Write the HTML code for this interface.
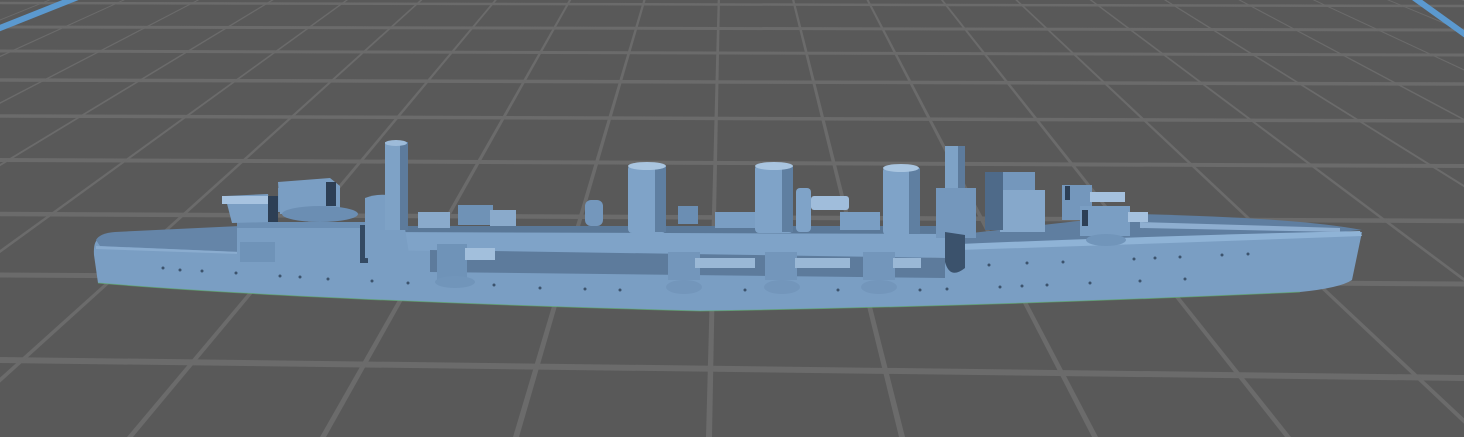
<!DOCTYPE html>
<html><head><meta charset="utf-8"><style>
html,body{margin:0;padding:0;background:#595959;overflow:hidden}
svg{display:block}
</style></head><body>
<svg width="1464" height="437" viewBox="0 0 1464 437" xmlns="http://www.w3.org/2000/svg">
<rect width="1464" height="437" fill="#595959"/>
<g stroke="#6b6b6b" fill="none">
<line x1="0" y1="3" x2="1464" y2="6" stroke-width="2.5"/>
<line x1="0" y1="27" x2="1464" y2="30" stroke-width="3"/>
<line x1="0" y1="51" x2="1464" y2="55" stroke-width="3"/>
<line x1="0" y1="80" x2="1464" y2="84" stroke-width="3.5"/>
<line x1="0" y1="116" x2="1464" y2="121" stroke-width="3.5"/>
<line x1="0" y1="160" x2="1464" y2="166" stroke-width="4"/>
<line x1="0" y1="214" x2="1464" y2="221" stroke-width="4.5"/>
<line x1="0" y1="275" x2="1464" y2="284" stroke-width="5"/>
<line x1="0" y1="360" x2="1464" y2="378" stroke-width="6"/>
</g>
<g fill="#6b6b6b">
<polygon points="725,-274 -1996,437 -1990,437"/>
<polygon points="725,-274 -1803,437 -1797,437"/>
<polygon points="725,-274 -1610,437 -1604,437"/>
<polygon points="725,-274 -1417,437 -1411,437"/>
<polygon points="725,-274 -1224,437 -1218,437"/>
<polygon points="725,-274 -1031,437 -1025,437"/>
<polygon points="725,-274 -838,437 -832,437"/>
<polygon points="725,-274 -645,437 -639,437"/>
<polygon points="725,-274 -452,437 -446,437"/>
<polygon points="725,-274 -259,437 -253,437"/>
<polygon points="725,-274 -66,437 -60,437"/>
<polygon points="725,-274 127,437 133,437"/>
<polygon points="725,-274 320,437 326,437"/>
<polygon points="725,-274 513,437 519,437"/>
<polygon points="725,-274 706,437 712,437"/>
<polygon points="725,-274 899,437 905,437"/>
<polygon points="725,-274 1092,437 1098,437"/>
<polygon points="725,-274 1285,437 1291,437"/>
<polygon points="725,-274 1478,437 1484,437"/>
<polygon points="725,-274 1671,437 1677,437"/>
<polygon points="725,-274 1864,437 1870,437"/>
<polygon points="725,-274 2057,437 2063,437"/>
<polygon points="725,-274 2250,437 2256,437"/>
<polygon points="725,-274 2443,437 2449,437"/>
<polygon points="725,-274 2636,437 2642,437"/>
<polygon points="725,-274 2829,437 2835,437"/>
<polygon points="725,-274 3022,437 3028,437"/>
<polygon points="725,-274 3215,437 3221,437"/>
</g>
<line x1="-5" y1="30" x2="78" y2="-3" stroke="#5b99cf" stroke-width="6"/>
<line x1="1413" y1="-3" x2="1470" y2="38" stroke="#5b99cf" stroke-width="6"/>

<path d="M100 238 Q93 240 94 255 L98 283 Q300 300 700 311 Q1000 306 1300 292 Q1340 288 1352 280 L1362 232 L945 240 L945 258 L100 240 Z" fill="#7a9ec3"/>
<path d="M945 236 L1140 214 Q1300 218 1362 230 Q1300 236 1200 240 L945 246 Z" fill="#5f7ea0"/>
<path d="M960 244 Q1150 236 1360 231 L1362 236 Q1150 244 960 250 Z" fill="#8fb3d6"/>
<path d="M96 240 Q100 233 115 232 L240 226 L240 252 L100 246 Z" fill="#6585a8"/>
<path d="M96 246 L240 252 L240 254 L96 249 Z" fill="#8aaccf"/>
<rect x="365" y="226" width="580" height="8" fill="#5a7898"/>
<path d="M365 232 L945 234 L945 258 L365 250 Z" fill="#7fa3c8"/>
<path d="M430 250 L945 258 L945 278 L430 272 Z" fill="#5d7b9c"/>
<rect x="237" y="222" width="128" height="40" fill="#7a9ec3"/>
<rect x="237" y="222" width="128" height="6" fill="#6c8fb4"/>
<rect x="360" y="225" width="8" height="38" fill="#344a63"/>
<rect x="240" y="242" width="35" height="20" fill="#6f93b8"/>
<path d="M225 196 L268 194 L272 222 L232 223 Z" fill="#7a9ec3"/>
<rect x="222" y="196" width="50" height="8" fill="#a7c3e0"/>
<rect x="268" y="196" width="10" height="26" fill="#2d3f55"/>
<rect x="278" y="188" width="40" height="24" fill="#7497bc"/>
<path d="M278 182 L330 178 L340 186 L340 212 L280 214 Z" fill="#7a9ec3"/>
<rect x="326" y="182" width="10" height="24" fill="#2d3f55"/>
<ellipse cx="320" cy="214" rx="38" ry="8" fill="#6b8eb3"/>
<path d="M365 198 Q380 192 400 197 L410 260 L365 258 Z" fill="#7a9ec3"/>
<rect x="385" y="142" width="22" height="88" fill="#7ea2c6"/>
<rect x="400" y="142" width="8" height="88" fill="#5d7b9c"/>
<ellipse cx="396" cy="143" rx="11" ry="3" fill="#9dbbd9"/>
<rect x="418" y="212" width="32" height="16" fill="#8aaacb"/>
<rect x="458" y="205" width="35" height="20" fill="#6f92b6"/>
<rect x="490" y="210" width="26" height="16" fill="#8aaacb"/>
<rect x="585" y="200" width="18" height="26" rx="6" fill="#7497bc"/>
<rect x="678" y="206" width="20" height="18" fill="#6b8eb3"/>
<rect x="715" y="212" width="40" height="16" fill="#7a9ec3"/>
<rect x="840" y="212" width="40" height="18" fill="#7a9ec3"/>
<rect x="437" y="244" width="30" height="40" fill="#6f93b8"/>
<rect x="465" y="248" width="30" height="12" fill="#a2bfdc"/>
<ellipse cx="455" cy="282" rx="20" ry="6" fill="#7195ba"/>
<g>
<rect x="628" y="165" width="38" height="68" rx="4" fill="#7fa3c8"/>
<rect x="655" y="166" width="11" height="66" fill="#5f7fa1"/>
<ellipse cx="647" cy="166" rx="19" ry="4" fill="#a9c5e0"/>
<rect x="755" y="165" width="38" height="68" rx="4" fill="#7fa3c8"/>
<rect x="782" y="166" width="11" height="66" fill="#5f7fa1"/>
<ellipse cx="774" cy="166" rx="19" ry="4" fill="#a9c5e0"/>
<rect x="883" y="167" width="37" height="68" rx="4" fill="#7fa3c8"/>
<rect x="909" y="168" width="11" height="66" fill="#5f7fa1"/>
<ellipse cx="901" cy="168" rx="18" ry="4" fill="#a9c5e0"/>
<rect x="796" y="188" width="15" height="44" rx="4" fill="#7fa3c8"/>
<rect x="811" y="196" width="38" height="14" rx="3" fill="#a0bddb"/>
</g>
<g fill="#7396bb">
<rect x="668" y="252" width="32" height="28"/><ellipse cx="684" cy="287" rx="18" ry="7"/>
<rect x="765" y="252" width="32" height="28"/><ellipse cx="782" cy="287" rx="18" ry="7"/>
<rect x="863" y="252" width="32" height="28"/><ellipse cx="879" cy="287" rx="18" ry="7"/>
</g>
<rect x="695" y="258" width="60" height="10" fill="#9ab8d6"/>
<rect x="795" y="258" width="55" height="10" fill="#9ab8d6"/>
<rect x="893" y="258" width="28" height="10" fill="#9ab8d6"/>
<rect x="945" y="146" width="20" height="82" fill="#7ea2c6"/>
<rect x="958" y="146" width="7" height="82" fill="#5d7b9c"/>
<rect x="936" y="188" width="40" height="50" fill="#7497bc"/>
<path d="M945 232 L945 262 Q950 280 965 268 L965 235 Z" fill="#3b526c"/>
<rect x="985" y="172" width="50" height="40" fill="#7497bc"/>
<rect x="1000" y="190" width="45" height="42" fill="#86a8cb"/>
<rect x="985" y="172" width="18" height="58" fill="#4e6a89"/>
<rect x="1062" y="185" width="30" height="35" fill="#7497bc"/>
<rect x="1090" y="192" width="35" height="10" fill="#a5c1de"/>
<rect x="1065" y="186" width="5" height="14" fill="#2d3f55"/>
<rect x="1080" y="206" width="50" height="30" fill="#7a9ec3"/>
<rect x="1128" y="212" width="20" height="10" fill="#a5c1de"/>
<rect x="1082" y="210" width="6" height="16" fill="#2d3f55"/>
<ellipse cx="1106" cy="240" rx="20" ry="6" fill="#7195ba"/>
<path d="M1140 222 L1340 228 L1340 232 L1140 228 Z" fill="#8eaed0"/>
<g fill="#3c536d">
<circle cx="163" cy="268" r="1.5"/><circle cx="180" cy="270" r="1.5"/><circle cx="202" cy="271" r="1.5"/>
<circle cx="236" cy="273" r="1.5"/><circle cx="280" cy="276" r="1.5"/><circle cx="300" cy="277" r="1.5"/>
<circle cx="328" cy="279" r="1.5"/><circle cx="372" cy="281" r="1.5"/><circle cx="408" cy="283" r="1.5"/>
<circle cx="494" cy="285" r="1.5"/><circle cx="540" cy="288" r="1.5"/><circle cx="585" cy="289" r="1.5"/>
<circle cx="620" cy="290" r="1.5"/><circle cx="745" cy="290" r="1.5"/><circle cx="838" cy="290" r="1.5"/>
<circle cx="920" cy="290" r="1.5"/><circle cx="947" cy="289" r="1.5"/>
<circle cx="1000" cy="287" r="1.5"/><circle cx="1022" cy="286" r="1.5"/><circle cx="1047" cy="285" r="1.5"/>
<circle cx="1090" cy="283" r="1.5"/><circle cx="1140" cy="281" r="1.5"/><circle cx="1185" cy="279" r="1.5"/>
<circle cx="989" cy="265" r="1.5"/><circle cx="1027" cy="263" r="1.5"/><circle cx="1063" cy="262" r="1.5"/>
<circle cx="1134" cy="259" r="1.5"/><circle cx="1155" cy="258" r="1.5"/><circle cx="1180" cy="257" r="1.5"/>
<circle cx="1222" cy="255" r="1.5"/><circle cx="1248" cy="254" r="1.5"/>
</g>
<path d="M98 283 Q300 300 700 311 Q1000 306 1300 292" stroke="#5fb06a" stroke-width="1" fill="none" opacity="0.6"/>
</svg>
</body></html>
